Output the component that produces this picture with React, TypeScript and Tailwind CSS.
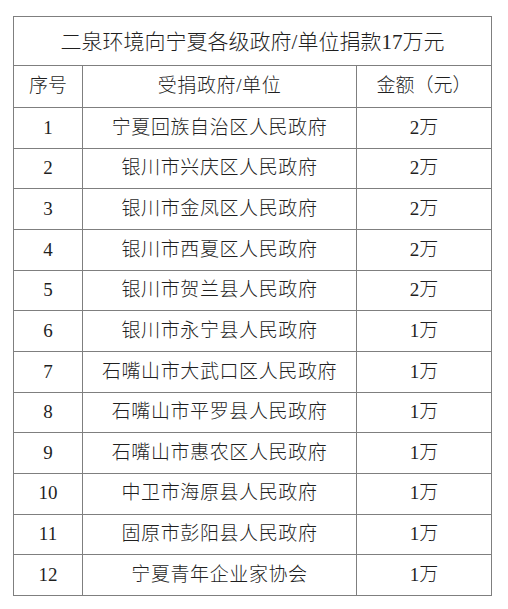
const rows: [string, string, string][] = [
  ["1", "宁夏回族自治区人民政府", "2万"],
  ["2", "银川市兴庆区人民政府", "2万"],
  ["3", "银川市金凤区人民政府", "2万"],
  ["4", "银川市西夏区人民政府", "2万"],
  ["5", "银川市贺兰县人民政府", "2万"],
  ["6", "银川市永宁县人民政府", "1万"],
  ["7", "石嘴山市大武口区人民政府", "1万"],
  ["8", "石嘴山市平罗县人民政府", "1万"],
  ["9", "石嘴山市惠农区人民政府", "1万"],
  ["10", "中卫市海原县人民政府", "1万"],
  ["11", "固原市彭阳县人民政府", "1万"],
  ["12", "宁夏青年企业家协会", "1万"],
];

function Row({ cells, className = "" }: { cells: [string, string, string]; className?: string }) {
  return (
    <div className={`grid grid-cols-[68px_274px_1fr] border-b border-[#7f7f7f] ${className}`}>
      <div className="flex items-center justify-center">{cells[0]}</div>
      <div className="flex items-center justify-center border-l border-[#7f7f7f] tracking-[0.6px]">{cells[1]}</div>
      <div className="flex items-center justify-center border-l border-[#7f7f7f]">{cells[2]}</div>
    </div>
  );
}

export default function App() {
  return (
    <div className="min-h-[609px] w-[508px] bg-white pt-[16px] pl-[13px] font-['Liberation_Serif','Noto_Sans_CJK_SC',serif] text-[19px] font-light text-[#1f1f1f]">
      <div className="w-[479px] border-x border-t border-[#7f7f7f]">
        <div className="flex h-[49px] items-center justify-center border-b border-[#7f7f7f] pt-[4px] text-[21px]">
          二泉环境向宁夏各级政府/单位捐款17万元
        </div>
        <Row cells={["序号", "受捐政府/单位", "金额（元）"]} className="h-[42px]" />
        {rows.map((r) => (
          <Row key={r[0]} cells={r} className="h-[40.67px]" />
        ))}
      </div>
    </div>
  );
}
